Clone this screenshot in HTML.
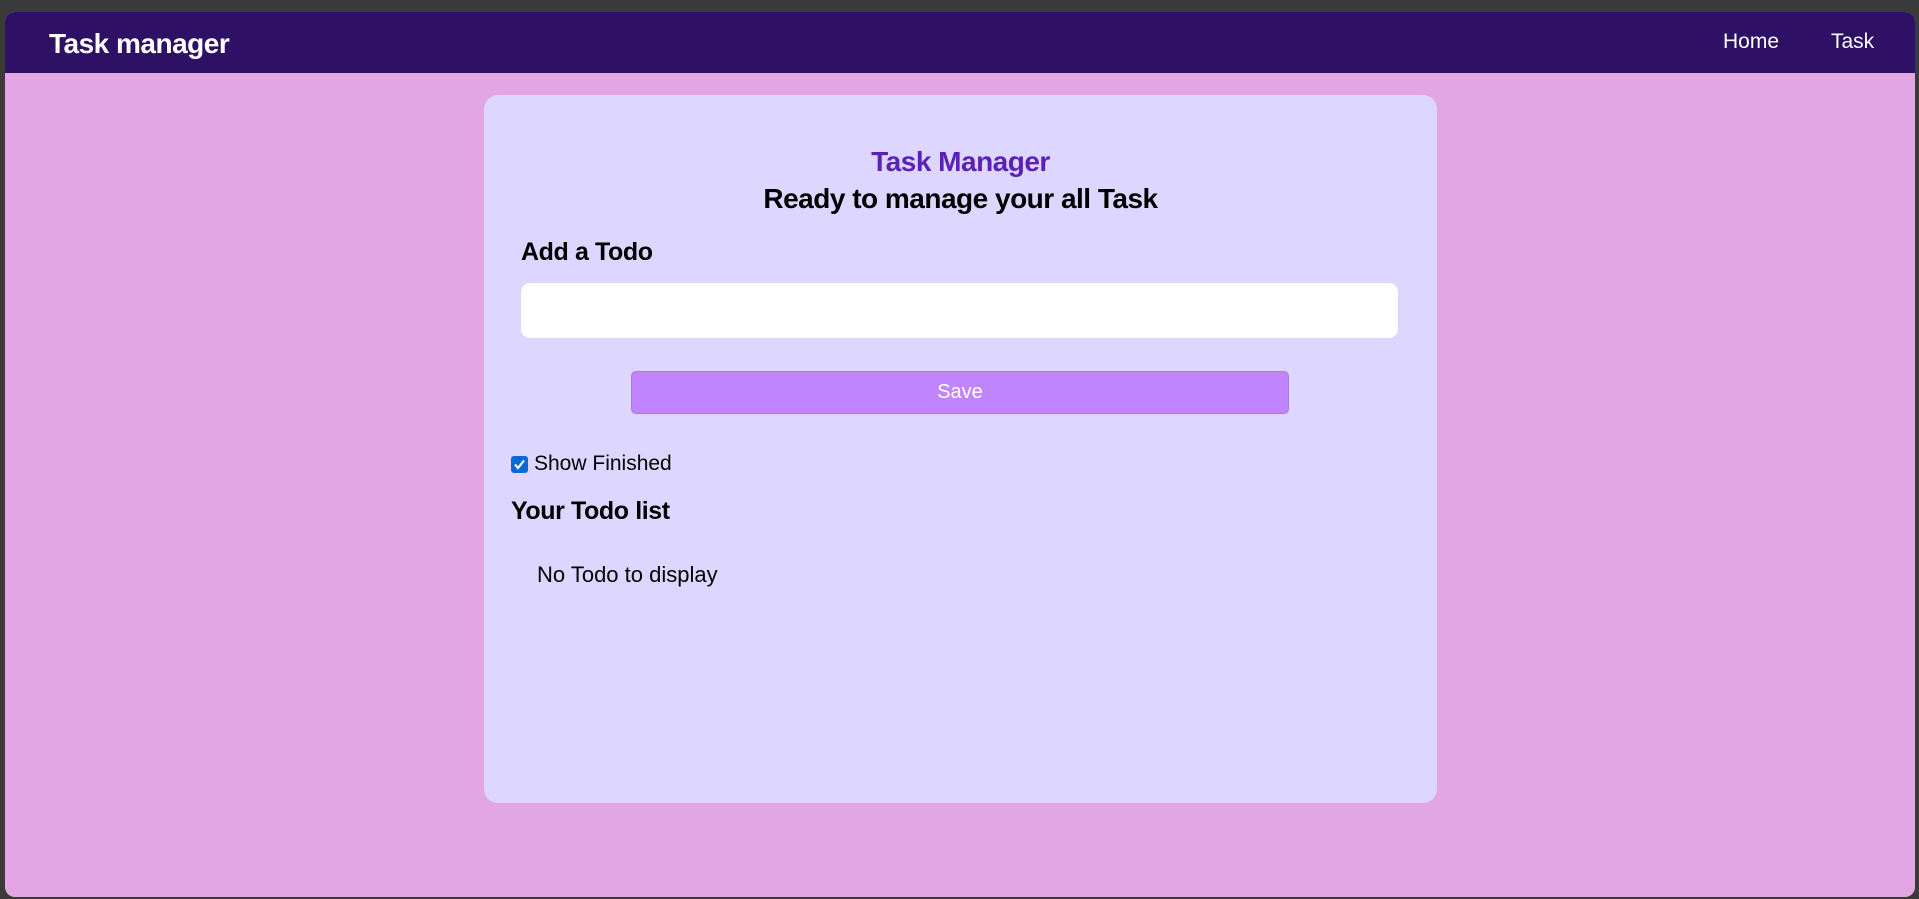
<!DOCTYPE html>
<html><head><meta charset="utf-8">
<style>
*{margin:0;padding:0;box-sizing:border-box}
html,body{width:1919px;height:899px;overflow:hidden;background:#3a3a3a;font-family:"Liberation Sans",sans-serif}
.win{position:absolute;left:5px;top:12px;width:1910px;height:885px;background:#e2a6e4;border-radius:10px;overflow:hidden}
.nav{position:absolute;left:0;top:0;width:100%;height:61px;background:#2e1065;color:#fff}
.brand{position:absolute;left:44px;top:16px;font-size:28px;font-weight:bold;letter-spacing:-0.5px}
.nl{position:absolute;top:18px;font-size:21px}
.card{position:absolute;left:479px;top:83px;width:953px;height:708px;background:#ddd6fe;border-radius:14px}
.t1{position:absolute;left:0;width:100%;text-align:center;top:51px;font-size:28px;font-weight:bold;color:#5b21b6;letter-spacing:-0.5px}
.t2{position:absolute;left:0;width:100%;text-align:center;top:88px;font-size:28px;font-weight:bold;color:#000;letter-spacing:-0.5px}
.h{position:absolute;font-size:25px;font-weight:bold;letter-spacing:-0.4px}
.inp{position:absolute;left:37px;top:188px;width:877px;height:55px;background:#fff;border-radius:9px}
.btn{position:absolute;left:147px;top:276px;width:658px;height:43px;background:#c084fc;border:1px solid #b075f0;border-radius:5px;color:#fff;font-size:20px;text-align:center;line-height:41px}
.cb{position:absolute;left:27px;top:361px;width:17px;height:17px;background:#0b69d6;border-radius:3px}
.cb svg{position:absolute;left:1px;top:1px}
.txt{position:absolute;font-size:21px;color:#000}
</style></head><body>
<div class="win">
 <div class="nav">
  <div class="brand">Task manager</div>
  <div class="nl" style="left:1718px">Home</div>
  <div class="nl" style="left:1826px">Task</div>
 </div>
 <div class="card">
  <div class="t1">Task Manager</div>
  <div class="t2">Ready to manage your all Task</div>
  <div class="h" style="left:37px;top:143px">Add a Todo</div>
  <div class="inp"></div>
  <div class="btn">Save</div>
  <div class="cb"><svg width="15" height="15" viewBox="0 0 15 15"><path d="M3 7.5 L6 11 L12 3.5" stroke="#fff" stroke-width="2.2" fill="none"/></svg></div>
  <div class="txt" style="left:50px;top:357px">Show Finished</div>
  <div class="h" style="left:27px;top:402px">Your Todo list</div>
  <div class="txt" style="left:53px;top:467px;font-size:22px">No Todo to display</div>
 </div>
</div>
</body></html>
